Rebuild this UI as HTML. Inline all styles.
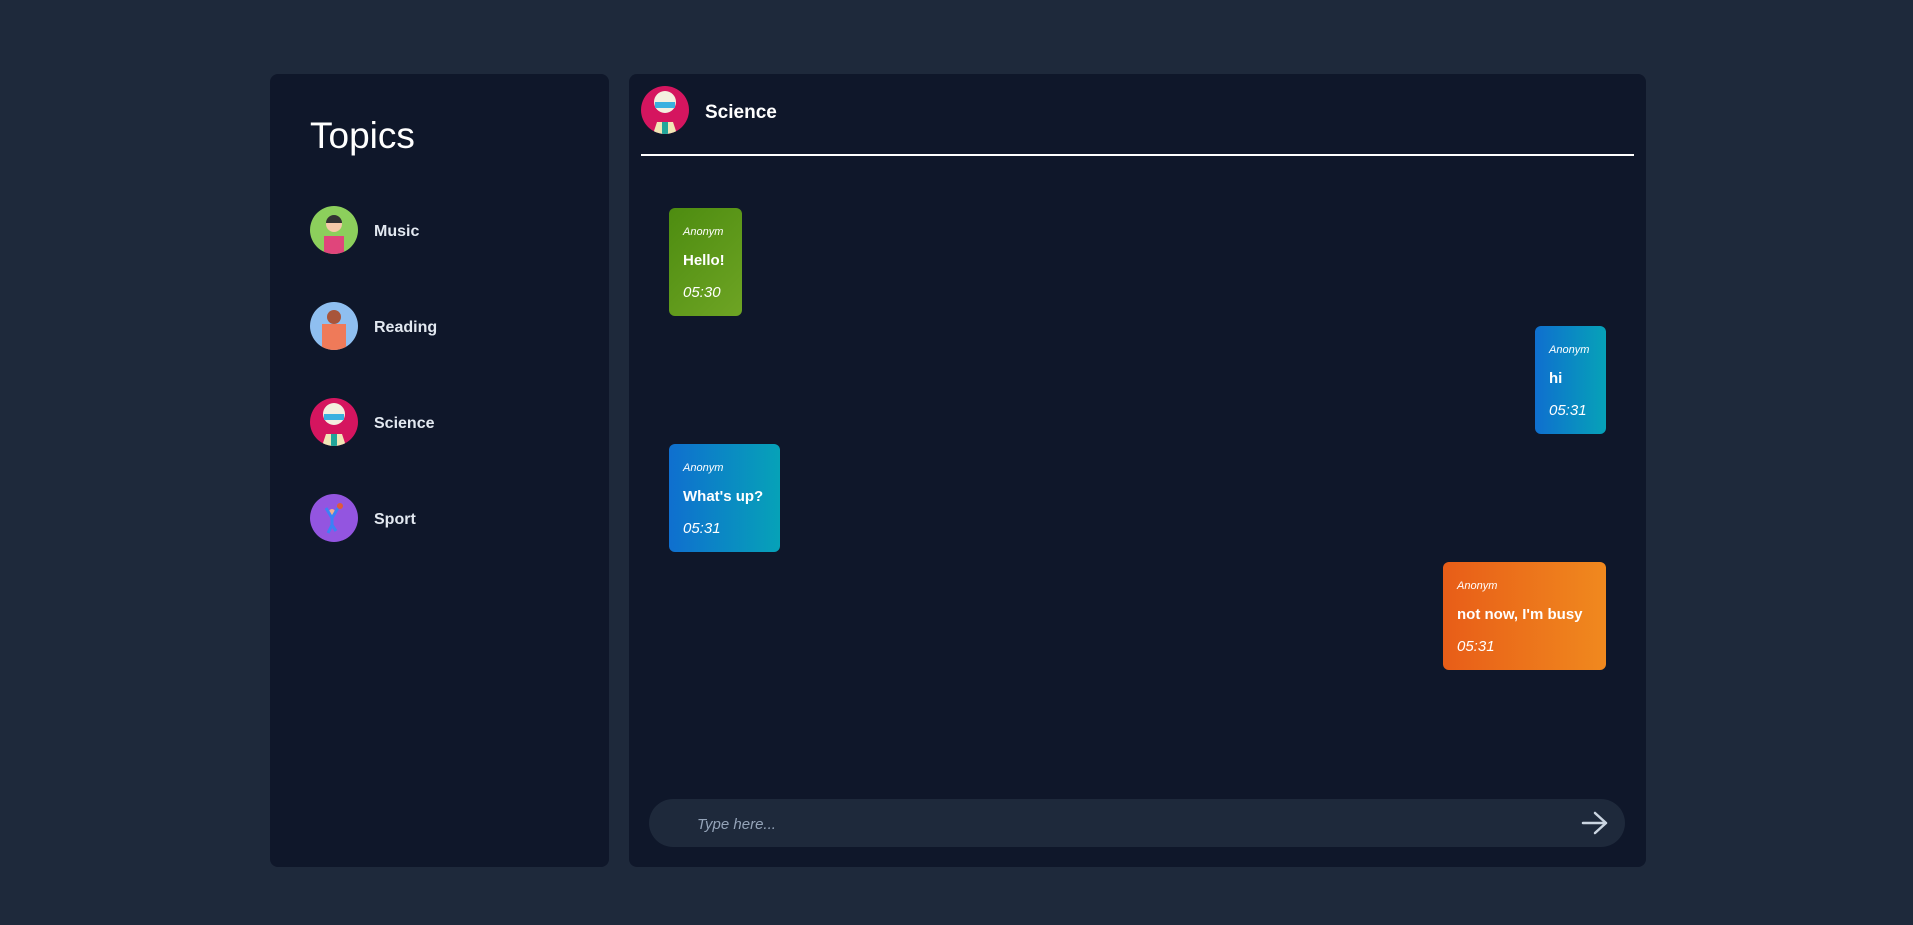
<!DOCTYPE html>
<html><head><meta charset="utf-8"><style>
*{margin:0;padding:0;box-sizing:border-box}
body{width:1913px;height:925px;background:#1e293b;font-family:"Liberation Sans",sans-serif;position:relative;overflow:hidden;color:#fff}
.panel{position:absolute;background:#0f172a;border-radius:8px}
.av{position:absolute;width:48px;height:48px;border-radius:50%;overflow:hidden}
.t{position:absolute;font-size:16px;color:#e2e8f0;font-weight:bold}
.b{position:absolute;border-radius:6px;padding:0 14px;height:108px}
.b .n{position:absolute;top:18px;left:14px;font-size:11px;font-style:italic}
.b .m{position:absolute;top:44px;left:14px;font-size:15px;font-weight:bold;white-space:nowrap}
.b .tm{position:absolute;top:76px;left:14px;font-size:15px;font-style:italic}
</style></head><body>
<div class="panel" style="left:270px;top:74px;width:339px;height:793px"></div>
<div class="panel" style="left:629px;top:74px;width:1017px;height:793px"></div>
<div style="position:absolute;left:310px;top:115px;font-size:37px;">Topics</div>

<div class="av" style="left:310px;top:206px;background:#8ccf5c"><svg width="48" height="48"><circle cx="24" cy="18" r="8" fill="#f5c9a8"/><path d="M16 17a8 8 0 0 1 16 0" fill="#333"/><rect x="14" y="30" width="20" height="18" fill="#e0457b"/></svg></div>
<div class="t" style="left:374px;top:223px">Music</div>
<div class="av" style="left:310px;top:302px;background:#8fbff0"><svg width="48" height="48"><circle cx="24" cy="15" r="7" fill="#a8553a"/><rect x="12" y="22" width="24" height="26" fill="#ef7a59"/></svg></div>
<div class="t" style="left:374px;top:319px">Reading</div>
<div class="av" style="left:310px;top:398px;background:#d5155f"><svg width="48" height="48"><circle cx="24" cy="16" r="11" fill="#f4efe0"/><rect x="14" y="16" width="20" height="6" fill="#3ab0e0"/><path d="M12 48l4-12h16l4 12z" fill="#f1e6b6"/><rect x="21" y="36" width="6" height="12" fill="#22a59a"/></svg></div>
<div class="t" style="left:374px;top:415px">Science</div>
<div class="av" style="left:310px;top:494px;background:#9355e0"><svg width="48" height="48"><circle cx="22" cy="18" r="3" fill="#f3b08a"/><path d="M22 21v10M16 14l6 10 6-10M22 31l-4 8M22 31l4 6" stroke="#3b82f6" stroke-width="3" fill="none"/><circle cx="30" cy="12" r="3" fill="#e05a3a"/></svg></div>
<div class="t" style="left:374px;top:511px">Sport</div>

<div class="av" style="left:641px;top:86px;background:#d5155f"><svg width="48" height="48"><circle cx="24" cy="16" r="11" fill="#f4efe0"/><rect x="14" y="16" width="20" height="6" fill="#3ab0e0"/><path d="M12 48l4-12h16l4 12z" fill="#f1e6b6"/><rect x="21" y="36" width="6" height="12" fill="#22a59a"/></svg></div>
<div style="position:absolute;left:705px;top:102px;font-size:19px;font-weight:bold">Science</div>
<div style="position:absolute;left:641px;top:154px;width:993px;height:2px;background:#fff"></div>

<div class="b" style="left:669px;top:208px;width:73px;background:linear-gradient(135deg,#4d8c10,#6ea424)"><div class="n">Anonym</div><div class="m">Hello!</div><div class="tm">05:30</div></div>
<div class="b" style="left:1535px;top:326px;width:71px;background:linear-gradient(90deg,#0f6fcf,#06a2b8)"><div class="n">Anonym</div><div class="m">hi</div><div class="tm">05:31</div></div>
<div class="b" style="left:669px;top:444px;width:111px;background:linear-gradient(90deg,#0f6fcf,#06a2b8)"><div class="n">Anonym</div><div class="m">What's up?</div><div class="tm">05:31</div></div>
<div class="b" style="left:1443px;top:562px;width:163px;background:linear-gradient(90deg,#e85d18,#f0891e)"><div class="n">Anonym</div><div class="m">not now, I'm busy</div><div class="tm">05:31</div></div>

<div style="position:absolute;left:649px;top:799px;width:976px;height:48px;border-radius:24px;background:#1e293b"></div>
<div style="position:absolute;left:697px;top:816px;font-size:15px;font-style:italic;color:#94a3b8">Type here...</div>
<svg style="position:absolute;left:1581px;top:810px" width="28" height="26"><path d="M2 13h23M14 3l11 10-11 10" stroke="#cbd5e1" stroke-width="2.5" fill="none" stroke-linecap="round" stroke-linejoin="round"/></svg>
</body></html>
